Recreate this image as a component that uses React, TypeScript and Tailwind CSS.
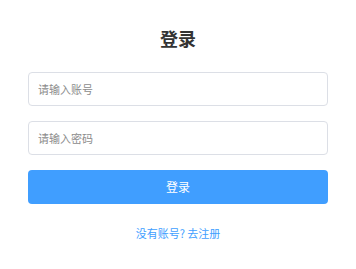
export default function App() {
  return (
    <div
      className="w-[356px] h-[269px] bg-white flex flex-col items-center pt-[25px]"
      style={{ fontFamily: '"Noto Sans CJK SC", "Noto Sans", sans-serif' }}
    >
      <h1 className="h-[26px] text-[18px] leading-[26px] font-bold text-[#333]">登录</h1>

      <form className="w-[300px] mt-[21px] flex flex-col gap-[15px]" onSubmit={(e) => e.preventDefault()}>
        <input
          type="text"
          placeholder="请输入账号"
          className="h-[34px] w-full rounded-[4px] border border-[#dcdfe6] px-[9px] text-[11px] text-[#333] placeholder:text-[#8c8c8c] outline-none"
        />
        <input
          type="password"
          placeholder="请输入密码"
          className="h-[34px] w-full rounded-[4px] border border-[#dcdfe6] px-[9px] text-[11px] text-[#333] placeholder:text-[#8c8c8c] outline-none"
        />
        <button
          type="submit"
          className="h-[34px] w-full rounded-[4px] bg-[#409eff] text-white text-[12px]"
        >
          登录
        </button>
      </form>

      <a href="#" className="mt-[21px] text-[11px] leading-[16px] text-[#409eff]">
        没有账号? 去注册
      </a>
    </div>
  );
}
